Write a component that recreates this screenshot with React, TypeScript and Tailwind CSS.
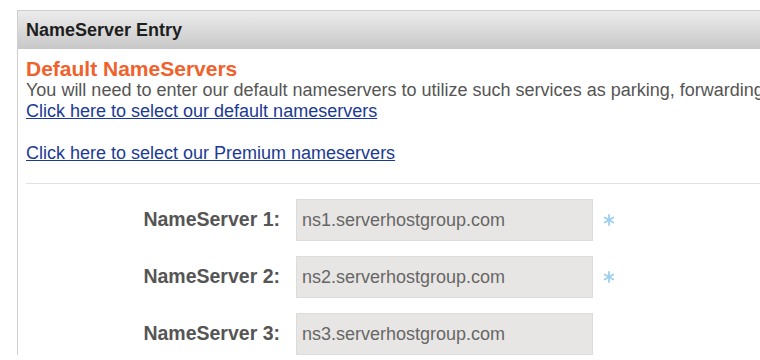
const servers = [
  { label: 'NameServer 1:', value: 'ns1.serverhostgroup.com', required: true },
  { label: 'NameServer 2:', value: 'ns2.serverhostgroup.com', required: true },
  { label: 'NameServer 3:', value: 'ns3.serverhostgroup.com', required: false },
];

function Asterisk() {
  return (
    <svg width="12" height="12" viewBox="0 0 12 12" className="ml-[10px]" stroke="#9ccff0" strokeWidth="1.8" strokeLinecap="round">
      <line x1="6" y1="1" x2="6" y2="11" />
      <line x1="1.7" y1="3.5" x2="10.3" y2="8.5" />
      <line x1="1.7" y1="8.5" x2="10.3" y2="3.5" />
    </svg>
  );
}

export default function App() {
  return (
    <div className="h-[360px] w-[760px] overflow-hidden bg-white pl-[17px] pt-[10px] font-['Liberation_Sans',Arial,sans-serif]">
      <div className="w-[820px] border-l border-t border-[#cfcfcf]">
        <div className="flex h-[38px] items-center bg-gradient-to-b from-[#ececec] to-[#c8c8c8] pl-[8px] text-[18px] font-bold text-[#1e1e1e]">
          NameServer Entry
        </div>
        <div className="pl-[8px] pt-[9px]">
          <h2 className="text-[21px] font-bold leading-[22px] text-[#f0612c]">Default NameServers</h2>
          <p className="whitespace-nowrap text-[18px] leading-[21px] text-[#555]">
            You will need to enter our default nameservers to utilize such services as parking, forwarding and more.
          </p>
          <a href="#" className="block text-[18px] leading-[21px] text-[#1b3a94] underline">
            Click here to select our default nameservers
          </a>
          <div className="h-[21px]" />
          <a href="#" className="block text-[18px] leading-[21px] text-[#1b3a94] underline">
            Click here to select our Premium nameservers
          </a>
          <div className="mt-[19px] border-t border-[#e2e2e2]" />
          <div className="flex flex-col gap-[15px] pt-[15px]">
            {servers.map((s) => (
              <div key={s.label} className="flex items-center">
                <label className="w-[270px] pr-[16px] text-right text-[19.5px] font-bold text-[#555]">{s.label}</label>
                <div className="flex h-[42px] w-[297px] items-center border border-[#dcdcdc] bg-[#e8e6e4] px-[5px] text-[18px] text-[#666]">
                  {s.value}
                </div>
                {s.required && <Asterisk />}
              </div>
            ))}
          </div>
        </div>
      </div>
    </div>
  );
}
